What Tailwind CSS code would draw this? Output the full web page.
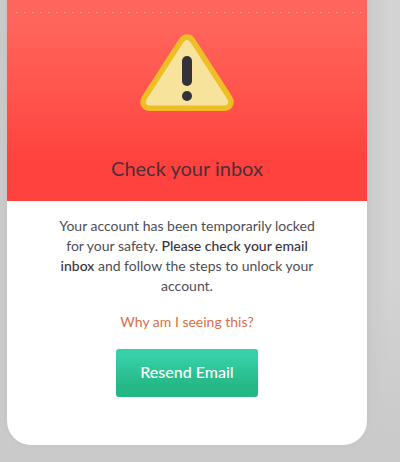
<!DOCTYPE html>
<html lang="en">
<head>
    <meta charset="UTF-8">
    <meta name="viewport" content="width=device-width, initial-scale=1.0">
    <title>Check your inbox</title>
    <script src="https://cdn.jsdelivr.net/npm/@tailwindcss/browser@4"></script>
</head>
<body class="h-[462px] overflow-hidden bg-[linear-gradient(to_bottom,transparent_60%,#cacaca_95%),linear-gradient(to_right,#cacaca_0px,#cacaca_368px,#d3d3d3_388px,#d3d3d3_400px)] pl-[7px] font-[Lato,sans-serif] text-[#37343d]">
    <!-- Account locked card -->
    <main class="flex h-[445px] w-[360px] flex-col overflow-hidden rounded-b-[24px] bg-white shadow-[0_0_6px_rgba(0,0,0,0.04)]">
        <header class="flex h-[201px] shrink-0 flex-col items-center bg-linear-to-b from-[#ff655c] from-10% to-[#ff423d] to-80%">
            <!-- Dotted line -->
            <div class="mt-3 ml-[9px] h-px w-[345px] self-start bg-[repeating-linear-gradient(to_right,#ffa69a_0px,#ffa69a_1px,transparent_1px,transparent_8px)]"></div>
            <svg class="mt-[21px] h-[78px] w-[94px]" viewBox="0 0 94 78" fill="none">
                <path d="M47 3 Q50.5 3 53 7 L89.5 63.5 Q92.5 69 89.5 72.2 Q88 74.2 84.5 74.2 H9.5 Q6 74.2 4.5 72.2 Q1.5 69 4.5 63.5 L41 7 Q43.5 3 47 3Z" fill="#f8e39c" stroke="#efbd24" stroke-width="5.5" stroke-linejoin="round"/>
                <rect x="42" y="22" width="10" height="30" rx="5" fill="#343239"/>
                <circle cx="47" cy="62" r="5" fill="#343239"/>
            </svg>
            <h1 class="mt-11 text-xl leading-6 text-[#4b2f3a]">Check your inbox</h1>
        </header>
        <section class="flex flex-col items-center pt-[15px] text-center text-sm">
            <p class="w-[264px] leading-5 text-[#504d55]">Your account has been temporarily locked for your safety. <span class="font-medium text-[#37343d]">Please check your email inbox</span> and follow the steps to unlock your account.</p>
            <a href="#" class="mt-4 leading-5 text-[#dc6e47]">Why am I seeing this?</a>
            <button class="mt-[17px] h-12 w-[142px] rounded-[3px] bg-linear-to-b from-[#37d0a9] from-15% to-[#25b887] to-75% pb-0.5 text-base font-medium text-white">Resend Email</button>
        </section>
    </main>
</body>
</html>
